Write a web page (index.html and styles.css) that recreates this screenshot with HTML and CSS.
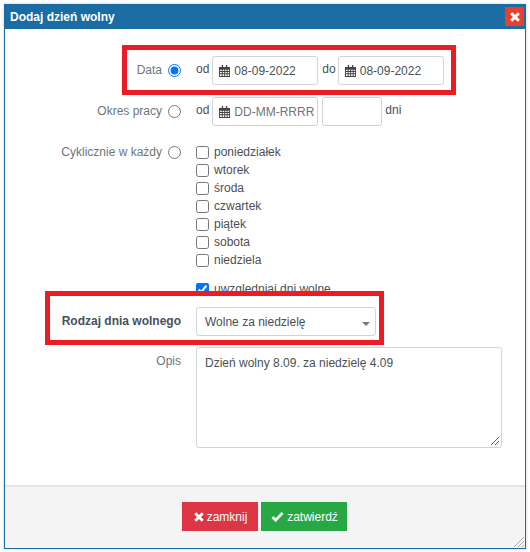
FILE: index.html
```html
<!DOCTYPE html>
<html lang="pl">
<head>
<meta charset="utf-8">
<title>Dodaj dzień wolny</title>
<link rel="stylesheet" href="styles.css">
</head>
<body>
<div class="dialog">
  <header class="titlebar">
    <span class="title">Dodaj dzień wolny</span>
    <button class="close" type="button" aria-label="Zamknij">
      <svg viewBox="0 0 12 12" width="12" height="12"><path d="M2.2 2.2 9.8 9.8M9.8 2.2 2.2 9.8" stroke="#fff" stroke-width="3" fill="none"/></svg>
    </button>
  </header>
  <main class="content">
    <div class="row row-date">
      <label class="label">Data</label>
      <input class="radio" type="radio" name="mode" checked>
      <div class="fields">
        <span class="word">od</span>
        <div class="input date"><svg class="cal" viewBox="0 0 12 13" width="11" height="12"><path d="M3 0h1.5v2H3zM7.5 0H9v2H7.5zM0 2h12v11H0zM1 5v1.5h2V5zm3 0v1.5h1.7V5zm2.7 0v1.5h1.7V5zm2.7 0v1.5H11V5zM1 7.5V9h2V7.5zm3 0V9h1.7V7.5zm2.7 0V9h1.7V7.5zm2.7 0V9H11V7.5zM1 10v2h2v-2zm3 0v2h1.7v-2zm2.7 0v2h1.7v-2zm2.7 0v2H11v-2z" fill="#444" fill-rule="evenodd"/></svg><span>08-09-2022</span></div>
        <span class="word word-do">do</span>
        <div class="input date"><svg class="cal" viewBox="0 0 12 13" width="11" height="12"><path d="M3 0h1.5v2H3zM7.5 0H9v2H7.5zM0 2h12v11H0zM1 5v1.5h2V5zm3 0v1.5h1.7V5zm2.7 0v1.5h1.7V5zm2.7 0v1.5H11V5zM1 7.5V9h2V7.5zm3 0V9h1.7V7.5zm2.7 0V9h1.7V7.5zm2.7 0V9H11V7.5zM1 10v2h2v-2zm3 0v2h1.7v-2zm2.7 0v2h1.7v-2zm2.7 0v2H11v-2z" fill="#444" fill-rule="evenodd"/></svg><span>08-09-2022</span></div>
      </div>
    </div>
    <div class="row row-period">
      <label class="label">Okres pracy</label>
      <input class="radio" type="radio" name="mode">
      <div class="fields">
        <span class="word">od</span>
        <div class="input date placeholder"><svg class="cal" viewBox="0 0 12 13" width="11" height="12"><path d="M3 0h1.5v2H3zM7.5 0H9v2H7.5zM0 2h12v11H0zM1 5v1.5h2V5zm3 0v1.5h1.7V5zm2.7 0v1.5h1.7V5zm2.7 0v1.5H11V5zM1 7.5V9h2V7.5zm3 0V9h1.7V7.5zm2.7 0V9h1.7V7.5zm2.7 0V9H11V7.5zM1 10v2h2v-2zm3 0v2h1.7v-2zm2.7 0v2h1.7v-2zm2.7 0v2H11v-2z" fill="#444" fill-rule="evenodd"/></svg><span>DD-MM-RRRR</span></div>
        <div class="input days"></div>
        <span class="word word-dni">dni</span>
      </div>
    </div>
    <div class="row row-cycle">
      <label class="label">Cyklicznie w każdy</label>
      <input class="radio" type="radio" name="mode">
      <div class="checks">
        <label class="check"><input type="checkbox">poniedziałek</label>
        <label class="check"><input type="checkbox">wtorek</label>
        <label class="check"><input type="checkbox">środa</label>
        <label class="check"><input type="checkbox">czwartek</label>
        <label class="check"><input type="checkbox">piątek</label>
        <label class="check"><input type="checkbox">sobota</label>
        <label class="check"><input type="checkbox">niedziela</label>
        <label class="check check-holidays"><input type="checkbox" checked>uwzględniaj dni wolne</label>
      </div>
    </div>
    <div class="row row-type">
      <label class="label label-strong">Rodzaj dnia wolnego</label>
      <div class="select"><span>Wolne za niedzielę</span><i class="caret"></i></div>
    </div>
    <div class="row row-desc">
      <label class="label label-desc">Opis</label>
      <div class="textarea">Dzień wolny 8.09. za niedzielę 4.09
        <svg class="grip" viewBox="0 0 10 10" width="10" height="10"><path d="M9 1 1 9M9 5 5 9" stroke="#666" fill="none"/></svg>
      </div>
    </div>
  </main>
  <footer class="footer">
    <button class="btn btn-red" type="button"><svg viewBox="0 0 12 12" width="10" height="10"><path d="M1.5 1.5 10.5 10.5M10.5 1.5 1.5 10.5" stroke="#fff" stroke-width="3.4" fill="none"/></svg>zamknij</button>
    <button class="btn btn-green" type="button"><svg viewBox="0 0 14 12" width="13" height="11"><path d="M1.5 6.5 5 10 12.5 2" stroke="#fff" stroke-width="3" fill="none"/></svg>zatwierdź</button>
    <svg class="corner" viewBox="0 0 12 12" width="12" height="12"><path d="M11 1 1 11M11 5 5 11M11 9 9 11" stroke="#aaa" fill="none"/></svg>
  </footer>
</div>
<div class="mark mark-date"></div>
<div class="mark mark-type"></div>
</body>
</html>
```
FILE: styles.css
```css
* { box-sizing: border-box; }
html, body { margin: 0; height: 100%; }
body {
  position: relative;
  width: 530px;
  height: 552px;
  overflow: hidden;
  background: #fff;
  padding: 4px 4px 3px 4px;
  font-family: "Liberation Sans", Arial, sans-serif;
  font-size: 12px;
  color: #495057;
}
.dialog {
  width: 522px;
  height: 545px;
  display: flex;
  flex-direction: column;
  border: 1px solid #1a6ca3;
  border-top: 0;
  background: #fff;
  box-shadow: 0 0 3px rgba(0,0,0,.2);
}
.titlebar {
  height: 25px;
  flex: none;
  background: #1a6ca3;
  display: flex;
  align-items: center;
  justify-content: space-between;
  padding: 0 1px 0 5px;
  color: #fff;
  font-weight: bold;
}
.close {
  width: 19px;
  height: 19px;
  margin: 0;
  padding: 0;
  border: 0;
  background: #e8402c;
  display: flex;
  align-items: center;
  justify-content: center;
}
.content { flex: 1; padding-top: 27px; }
.row { display: flex; align-items: flex-start; }
.label { width: 157px; text-align: right; color: #6c757d; flex: none; line-height: 29px; }
.radio { width: 13px; height: 13px; margin: 8px 0 0 6px; flex: none; }
.fields { display: flex; align-items: flex-start; margin-left: 15px; }
.word { line-height: 27px; }
.input {
  height: 29px;
  border: 1px solid #ced4da;
  border-radius: 3px;
  background: #fff;
  display: flex;
  align-items: center;
}
.date { width: 106px; padding-left: 6px; margin-left: 3px; gap: 4px; }
.placeholder { color: #6c757d; }
.word-do { margin: 0 -1px 0 4px; }
.days { width: 60px; margin-left: 4px; }
.word-dni { margin-left: 3px; }
.row-period { margin-top: 12px; }
.row-cycle { margin-top: 15px; height: 166px; overflow: visible; }
.row-cycle .label { line-height: 22px; }
.row-cycle .radio { margin-top: 5px; }
.checks { margin-left: 15px; padding-top: 2px; display: flex; flex-direction: column; }
.check { display: flex; align-items: center; height: 18px; gap: 5px; white-space: nowrap; }
.check input { width: 13px; height: 13px; margin: 0; }
.check-holidays { margin-top: 11px; }
.row-type { margin-top: 0; }
.label-strong { width: 176px; font-weight: bold; color: #495057; }
.select {
  width: 180px;
  height: 29px;
  margin-left: 15px;
  border: 1px solid #ced4da;
  border-radius: 3px;
  background: #fff;
  padding: 0 8px;
  display: flex;
  align-items: center;
  justify-content: space-between;
}
.caret { width: 0; height: 0; border: 4px solid transparent; border-top: 4px solid #777; border-bottom: 0; margin: 4px -3px 0 0; }
.row-desc { margin-top: 12px; }
.label-desc { width: 176px; line-height: 26px; }
.textarea {
  position: relative;
  width: 306px;
  height: 101px;
  margin-left: 15px;
  margin-top: -1px;
  padding: 6px 8px;
  border: 1px solid #ced4da;
  border-radius: 3px;
  line-height: 18px;
}
.grip { position: absolute; right: 1px; bottom: 1px; }
.footer {
  position: relative;
  flex: none;
  height: 63px;
  background: #f4f4f4;
  border-top: 2px solid #e5e5e5;
  display: flex;
  justify-content: center;
  gap: 3px;
  padding-top: 15px;
  padding-right: 2px;
}
.btn {
  height: 29px;
  border: 0;
  color: #fff;
  font: 12px "Liberation Sans", Arial, sans-serif;
  display: flex;
  align-items: center;
  justify-content: center;
  padding: 0 0 0 2px;
  gap: 3px;
}
.btn-red { width: 76px; background: #dc3545; }
.btn-green { width: 86px; background: #28a745; }
.corner { position: absolute; right: 0; bottom: 0; }
.mark { position: absolute; border: 5px solid #ed1c24; pointer-events: none; }
.mark-date { left: 122px; top: 45px; width: 334px; height: 50px; }
.mark-type { left: 45px; top: 291px; width: 339px; height: 54px; }
```
